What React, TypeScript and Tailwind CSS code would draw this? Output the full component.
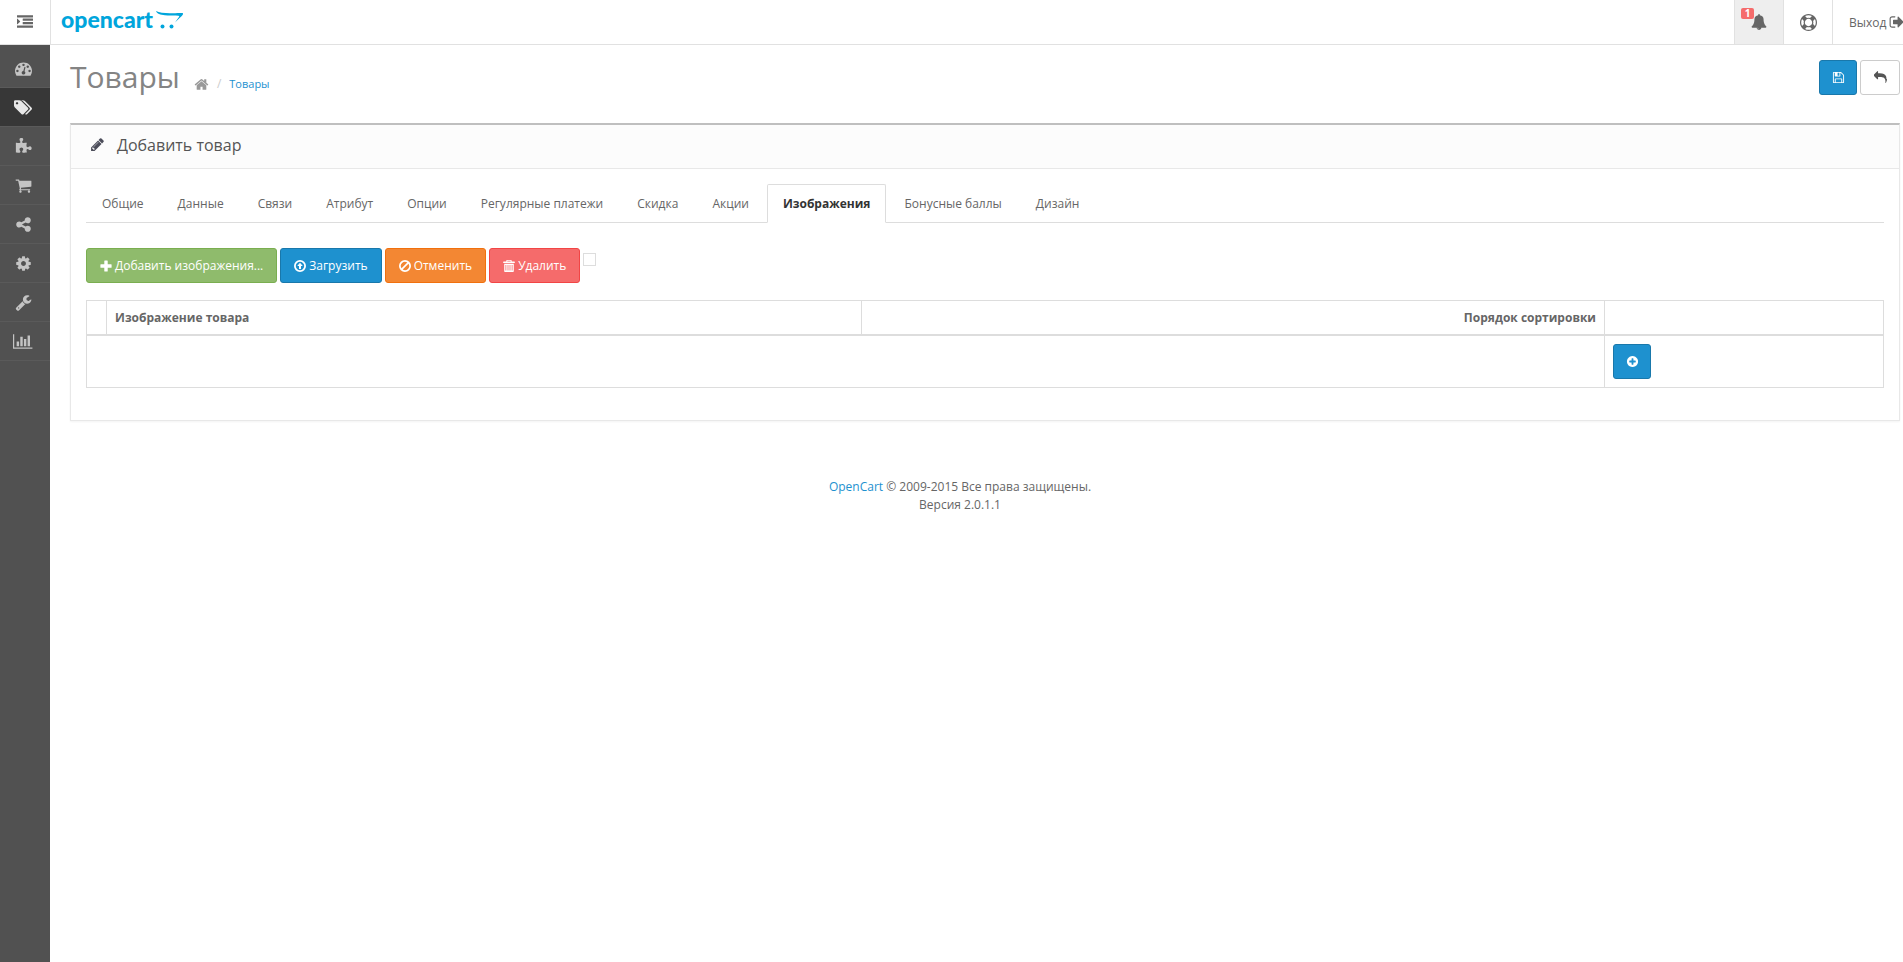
import { useState } from 'react';
import clsx from 'clsx';

type IconProps = { d: string; className?: string; viewBox?: string };

function Icon({ d, className, viewBox = '0 0 1792 1792' }: IconProps) {
  return (
    <svg viewBox={viewBox} className={clsx('inline-block shrink-0 fill-current', className)} aria-hidden="true">
      <path fillRule="evenodd" d={d} />
    </svg>
  );
}

const icons = {
  indent:
    'M352 832q0 14-9 23l-288 288q-9 9-23 9-13 0-22.5-9.5t-9.5-22.5v-576q0-13 9.5-22.5t22.5-9.5q14 0 23 9l288 288q9 9 9 23zM32 1280h1728q13 0 22.5 9.5t9.5 22.5v192q0 13-9.5 22.5t-22.5 9.5h-1728q-13 0-22.5-9.5t-9.5-22.5v-192q0-13 9.5-22.5t22.5-9.5zM672 896h1088q13 0 22.5 9.5t9.5 22.5v192q0 13-9.5 22.5t-22.5 9.5h-1088q-13 0-22.5-9.5t-9.5-22.5v-192q0-13 9.5-22.5t22.5-9.5zM672 512h1088q13 0 22.5 9.5t9.5 22.5v192q0 13-9.5 22.5t-22.5 9.5h-1088q-13 0-22.5-9.5t-9.5-22.5v-192q0-13 9.5-22.5t22.5-9.5zM32 128h1728q13 0 22.5 9.5t9.5 22.5v192q0 13-9.5 22.5t-22.5 9.5h-1728q-13 0-22.5-9.5t-9.5-22.5v-192q0-13 9.5-22.5t22.5-9.5z',
  dashboard:
    'M384 1152q0-53-37.5-90.5t-90.5-37.5-90.5 37.5-37.5 90.5 37.5 90.5 90.5 37.5 90.5-37.5 37.5-90.5zm192-448q0-53-37.5-90.5t-90.5-37.5-90.5 37.5-37.5 90.5 37.5 90.5 90.5 37.5 90.5-37.5 37.5-90.5zm428 481l101-382q6-26-7.5-48.5t-38.5-29.5-48 6.5-30 39.5l-101 382q-60 5-107 43.5t-63 98.5q-20 77 20 146t117 89 146-20 89-117q16-60-6-117t-72-91zm660-33q0-53-37.5-90.5t-90.5-37.5-90.5 37.5-37.5 90.5 37.5 90.5 90.5 37.5 90.5-37.5 37.5-90.5zm-640-640q0-53-37.5-90.5t-90.5-37.5-90.5 37.5-37.5 90.5 37.5 90.5 90.5 37.5 90.5-37.5 37.5-90.5zm448 192q0-53-37.5-90.5t-90.5-37.5-90.5 37.5-37.5 90.5 37.5 90.5 90.5 37.5 90.5-37.5 37.5-90.5zm320 448q0 261-141 483-19 29-54 29h-1402q-35 0-54-29-141-221-141-483 0-182 71-348t191-286 286-191 348-71 348 71 286 191 191 286 71 348z',
  tags: 'M448 448q0-53-37.5-90.5t-90.5-37.5-90.5 37.5-37.5 90.5 37.5 90.5 90.5 37.5 90.5-37.5 37.5-90.5zm1067 576q0 53-37 90l-491 492q-39 37-91 37-53 0-90-37l-715-716q-38-37-64.5-101t-26.5-117v-416q0-52 38-90t90-38h416q53 0 117 26.5t102 64.5l715 714q37 39 37 91zm384 0q0 53-37 90l-491 492q-39 37-91 37-36 0-59-14t-53-45l470-470q37-37 37-90 0-52-37-91l-715-714q-38-38-102-64.5t-117-26.5h224q53 0 117 26.5t102 64.5l715 714q37 39 37 91z',
  puzzle:
    'M1755 1083q0 81-44.5 135t-123.5 54q-41 0-77.5-17.5t-59-38-56.5-38-71-17.5q-110 0-110 124 0 39 16 115t15 115v5q-22 0-33 1-34 3-97.5 11.5t-115.5 13.5-98 5q-61 0-103-26.5t-42-83.5q0-37 17.5-71t38-56.5 38-59 17.5-77.5q0-79-54-123.5t-135-44.5q-84 0-143 45.5t-59 127.5q0 43 15 83t33.5 64.5 33.5 53 15 50.5q0 45-46 89-37 35-117 35-95 0-245-24-9-2-27.5-4t-27.5-4l-13-2q-1 0-3-1-2 0-2-1v-1024q2 1 17.5 3.5t34 5 21.5 3.5q150 24 245 24 80 0 117-35 46-44 46-89 0-22-15-50.5t-33.5-53-33.5-64.5-15-83q0-82 59-127.5t144-45.5q80 0 134 44.5t54 123.5q0 41-17.5 77.5t-38 59-38 56.5-17.5 71q0 57 42 83.5t103 26.5q64 0 180-15t163-17v2q-1 2-3.5 17.5t-5 34-3.5 21.5q-24 150-24 245 0 80 35 117 44 46 89 46 22 0 50.5-15t53-33.5 64.5-33.5 83-15q82 0 127.5 59t45.5 143z',
  cart: 'M704 1536q0 52-38 90t-90 38-90-38-38-90 38-90 90-38 90 38 38 90zm896 0q0 52-38 90t-90 38-90-38-38-90 38-90 90-38 90 38 38 90zm128-1088v512q0 24-16.5 42.5t-40.5 21.5l-1044 122q13 60 13 70 0 16-24 64h920q26 0 45 19t19 45-19 45-45 19h-1024q-26 0-45-19t-19-45q0-11 8-31.5t16-36 21.5-40 15.5-29.5l-177-823h-204q-26 0-45-19t-19-45 19-45 45-19h256q16 0 28.5 6.5t19.5 15.5 13 24.5 8 26 5.5 29.5 4.5 26h1201q26 0 45 19t19 45z',
  share:
    'M1344 1024q133 0 226.5 93.5t93.5 226.5-93.5 226.5-226.5 93.5-226.5-93.5-93.5-226.5q0-12 2-34l-360-180q-92 86-218 86-133 0-226.5-93.5t-93.5-226.5 93.5-226.5 226.5-93.5q126 0 218 86l360-180q-2-22-2-34 0-133 93.5-226.5t226.5-93.5 226.5 93.5 93.5 226.5-93.5 226.5-226.5 93.5q-126 0-218-86l-360 180q2 22 2 34t-2 34l360 180q92-86 218-86z',
  cog: 'M1152 896q0-106-75-181t-181-75-181 75-75 181 75 181 181 75 181-75 75-181zm512-109v222q0 12-8 23t-20 13l-185 28q-19 54-39 91 35 50 107 138 10 12 10 25t-9 23q-27 37-99 108t-94 71q-12 0-26-9l-138-108q-44 23-91 38-16 136-29 186-7 28-36 28h-222q-14 0-24.5-8.5t-11.5-21.5l-28-184q-49-16-90-37l-141 107q-10 9-25 9-14 0-25-11-126-114-165-168-7-10-7-23 0-12 8-23 15-21 51-66.5t54-70.5q-27-50-41-99l-183-27q-13-2-21-12.5t-8-23.5v-222q0-12 8-23t19-13l186-28q14-46 39-92-40-57-107-138-10-12-10-24 0-10 9-23 26-36 98.5-107.5t94.5-71.5q13 0 26 10l138 107q44-23 91-38 16-136 29-186 7-28 36-28h222q14 0 24.5 8.5t11.5 21.5l28 184q49 16 90 37l142-107q9-9 24-9 13 0 25 10 129 119 165 170 7 8 7 22 0 12-8 23-15 21-51 66.5t-54 70.5q26 50 41 98l183 28q13 2 21 12.5t8 23.5z',
  wrench:
    'M448 1472q0-26-19-45t-45-19-45 19-19 45 19 45 45 19 45-19 19-45zm644-420l-682 682q-37 37-90 37-52 0-91-37l-106-108q-38-36-38-90 0-53 38-91l681-681q39 98 114.5 173.5t173.5 114.5zm634-435q0 39-23 106-47 134-164.5 217.5t-258.5 83.5q-185 0-316.5-131.5t-131.5-316.5 131.5-316.5 316.5-131.5q58 0 121.5 16.5t107.5 46.5q16 11 16 28t-16 28l-293 169v224l193 107q5-3 79-48.5t135.5-81 70.5-35.5q15 0 23.5 10t8.5 25z',
  chart:
    'M640 896v512h-256v-512h256zm384-512v1024h-256v-1024h256zm1024 1152v128h-2048v-1536h128v1408h1920zm-640-896v768h-256v-768h256zm384-384v1152h-256v-1152h256z',
  bell: 'M912 1696q0-16-16-16-59 0-101.5-42.5t-42.5-101.5q0-16-16-16t-16 16q0 73 51.5 124.5t124.5 51.5q16 0 16-16zm816-288q0 52-38 90t-90 38h-448q0 106-75 181t-181 75-181-75-75-181h-448q-52 0-90-38t-38-90q50-42 91-88t85-119.5 74.5-158.5 50-206 19.5-260q0-152 117-282.5t307-158.5q-8-19-8-39 0-40 28-68t68-28 68 28 28 68q0 20-8 39 190 28 307 158.5t117 282.5q0 139 19.5 260t50 206 74.5 158.5 85 119.5 91 88z',
  lifeRing:
    'M896 0q182 0 348 71t286 191 191 286 71 348-71 348-191 286-286 191-348 71-348-71-286-191-191-286-71-348 71-348 191-286 286-191 348-71zm0 128q-190 0-361 90l194 194q82-28 167-28t167 28l194-194q-171-90-361-90zm-678 1129l194-194q-28-82-28-167t28-167l-194-194q-90 171-90 361t90 361zm678 407q190 0 361-90l-194-194q-82 28-167 28t-167-28l-194 194q171 90 361 90zm0-384q159 0 271.5-112.5t112.5-271.5-112.5-271.5-271.5-112.5-271.5 112.5-112.5 271.5 112.5 271.5 271.5 112.5zm484-217l194 194q90-171 90-361t-90-361l-194 194q28 82 28 167t-28 167z',
  signOut:
    'M704 1440q0 4 1 20t.5 26.5-3 23.5-10 19.5-20.5 6.5h-320q-119 0-203.5-84.5t-84.5-203.5v-704q0-119 84.5-203.5t203.5-84.5h320q13 0 22.5 9.5t9.5 22.5q0 4 1 20t.5 26.5-3 23.5-10 19.5-20.5 6.5h-320q-66 0-113 47t-47 113v704q0 66 47 113t113 47h312l11.5 1 11.5 3 8 5.5 7 9 2 13.5zm928-544q0 26-19 45l-544 544q-19 19-45 19t-45-19-19-45v-288h-448q-26 0-45-19t-19-45v-384q0-26 19-45t45-19h448v-288q0-26 19-45t45-19 45 19l544 544q19 19 19 45z',
  home: 'M1472 992v480q0 26-19 45t-45 19h-384v-384h-256v384h-384q-26 0-45-19t-19-45v-480q0-1 .5-3t.5-3l575-474 575 474q1 2 1 6zm223-69l-62 74q-8 9-21 11h-3q-13 0-21-7l-692-577-692 577q-12 8-24 7-13-2-21-11l-62-74q-8-10-7-23.5t11-21.5l719-599q32-26 76-26t76 26l244 204v-195q0-14 9-23t23-9h192q14 0 23 9t9 23v408l219 182q10 8 11 21.5t-7 23.5z',
  save: 'M512 1536h768v-384h-768v384zm896 0h128v-896q0-14-10-38.5t-20-34.5l-281-281q-10-10-34-20t-39-10v416q0 40-28 68t-68 28h-576q-40 0-68-28t-28-68v-416h-128v1280h128v-416q0-40 28-68t68-28h832q40 0 68 28t28 68v416zm-384-928v-320q0-13-9.5-22.5t-22.5-9.5h-192q-13 0-22.5 9.5t-9.5 22.5v320q0 13 9.5 22.5t22.5 9.5h192q13 0 22.5-9.5t9.5-22.5zm640 32v928q0 40-28 68t-68 28h-1344q-40 0-68-28t-28-68v-1344q0-40 28-68t68-28h928q40 0 88 20t76 48l280 280q28 28 48 76t20 88z',
  reply:
    'M1792 1120q0 166-127 451-3 7-10.5 24t-13.5 30-13 22q-12 17-28 17-15 0-23.5-10t-8.5-25q0-9 2.5-26.5t2.5-23.5q5-68 5-123 0-112-19.5-200.5t-54-153.5-89.5-112-117.5-79-147.5-46-170.5-24-194.5-7h-224v256q0 26-19 45t-45 19-45-19l-512-512q-19-19-19-45t19-45l512-512q19-19 45-19t45 19 19 45v256h224q713 0 875 403 53 134 53 333z',
  pencil:
    'M491 1536l91-91-235-235-91 91v107h128v128h107zm523-928q0-22-22-22-10 0-17 7l-542 542q-7 7-7 17 0 22 22 22 10 0 17-7l542-542q7-7 7-17zm-54-192l416 416-832 832h-416v-416zm683 96q0 53-37 90l-166 166-416-416 166-165q36-38 90-38 53 0 91 38l235 234q37 39 37 91z',
  plusCircle:
    'M1344 960v-128q0-26-19-45t-45-19h-256v-256q0-26-19-45t-45-19h-128q-26 0-45 19t-19 45v256h-256q-26 0-45 19t-19 45v128q0 26 19 45t45 19h256v256q0 26 19 45t45 19h128q26 0 45-19t19-45v-256h256q26 0 45-19t19-45zm320-64q0 209-103 385.5t-279.5 279.5-385.5 103-385.5-103-279.5-279.5-103-385.5 103-385.5 279.5-279.5 385.5-103 385.5 103 279.5 279.5 103 385.5z',
  // the uploader toolbar icons sit on a 12 unit grid
  plus: 'M4.300.9q0-.5.5-.5h2.400q.5 0 .5.5v3.400h3.400q.5 0 .5.5v2.400q0 .5-.5.5h-3.400v3.400q0 .5-.5.5h-2.400q-.5 0-.5-.5v-3.400h-3.400q-.5 0-.5-.5v-2.400q0-.5.5-.5h3.400z',
  upload:
    'M6 0a6 6 0 1 1 0 12a6 6 0 1 1 0-12zM6 1.800a4.200 4.200 0 1 0 0 8.400a4.200 4.200 0 1 0 0-8.400zM6 2.700l2.800 3.200h-1.800v3h-2v-3h-1.800z',
  ban: 'M6 0a6 6 0 1 1 0 12a6 6 0 1 1 0-12zM8.300 2.500a4.200 4.200 0 0 0-5.800 5.800zM9.500 3.700l-5.800 5.800a4.200 4.200 0 0 0 5.800-5.800z',
  trash:
    'M4 0h4q.7 0 .7.7v.8h2.600q.5 0 .5.5v1h-11.600v-1q0-.5.5-.5h2.600v-.8q0-.7.7-.7zM4.300.8v.7h3.400v-.7zM1.200 3.800h9.600v7.400q0 .8-.8.8h-8q-.8 0-.8-.8zM2.500 5v5.500h.8v-5.500zM4.600 5v5.500h.8v-5.500zM6.600 5v5.500h.8v-5.500zM8.700 5v5.500h.8v-5.500z',
};

const menu = [
  { label: 'Панель состояния', d: icons.dashboard, viewBox: '0 0 1792 1792' },
  { label: 'Каталог', d: icons.tags, viewBox: '0 0 1899 1792', active: true },
  { label: 'Дополнения', d: icons.puzzle, viewBox: '0 0 1792 1792' },
  { label: 'Продажи', d: icons.cart, viewBox: '0 0 1792 1792' },
  { label: 'Маркетинг', d: icons.share, viewBox: '0 0 1792 1792' },
  { label: 'Система', d: icons.cog, viewBox: '0 0 1792 1792' },
  { label: 'Инструменты', d: icons.wrench, viewBox: '0 0 1792 1792' },
  { label: 'Отчеты', d: icons.chart, viewBox: '0 0 2048 1792' },
];

const tabs = [
  'Общие',
  'Данные',
  'Связи',
  'Атрибут',
  'Опции',
  'Регулярные платежи',
  'Скидка',
  'Акции',
  'Изображения',
  'Бонусные баллы',
  'Дизайн',
];

const actions = [
  { label: 'Добавить изображения...', d: icons.plus, color: 'border-[#7aae50] bg-[#8fbb6c]' },
  { label: 'Загрузить', d: icons.upload, color: 'border-[#1978ab] bg-[#1e91cf]' },
  { label: 'Отменить', d: icons.ban, color: 'border-[#f1700d] bg-[#f38733]' },
  { label: 'Удалить', d: icons.trash, color: 'border-[#f24545] bg-[#f56b6b]' },
];

function Header() {
  return (
    <header className="flex h-[45px] overflow-hidden border-b border-[#e1e1e1] bg-white">
      <button aria-label="Меню" className="flex w-[51px] shrink-0 items-center justify-center border-r border-[#e1e1e1] text-[#666]">
        <Icon d={icons.indent} className="size-4" />
      </button>
      <a href="#" className="flex items-start gap-[3px] pt-[5px] pl-2.5 text-[#00a5dc]">
        <span className="font-[Lato,sans-serif] text-[23px] leading-7 font-black">opencart</span>
        <svg viewBox="0 0 27 18" className="mt-1.5 h-[18px] w-[27px] fill-current" aria-hidden="true">
          <path d="M0 0c3 1.800 8 2.200 14 2.200c5 0 10-.6 12.600-.1c1.400.9-.8 2.900-3 5l-4.600 4.300l3.200-4.500c1.200-1.500 1.600-2 .2-2.200c-5-.4-9 .1-13.500-.4c-4.500-.5-8-1.500-8.900-4.300z" />
          <circle cx="6.500" cy="15.500" r="2" />
          <circle cx="15.500" cy="15.500" r="2" />
        </svg>
      </a>
      <nav className="ml-auto flex text-[#666]">
        <button aria-label="Уведомления" className="relative flex w-[49px] items-center justify-center border-l border-[#e1e1e1] bg-[#eee]">
          <Icon d={icons.bell} className="size-4" />
          <span className="absolute top-2 left-1.5 flex h-[11px] w-[13px] items-center justify-center rounded-xs bg-[#f56b6b] text-[10px] font-bold text-white">
            1
          </span>
        </button>
        <button aria-label="Помощь" className="flex w-[49px] items-center justify-center border-l border-[#e1e1e1]">
          <Icon d={icons.lifeRing} className="size-[17px]" />
        </button>
        <a href="#" className="flex w-[71px] items-center gap-[3px] border-l border-[#e1e1e1] pl-4 whitespace-nowrap">
          Выход
          <Icon d={icons.signOut} className="size-4" />
        </a>
      </nav>
    </header>
  );
}

function Sidebar() {
  return (
    <nav className="w-[50px] shrink-0 bg-[#515151] pt-1">
      <ul>
        {menu.map(item => (
          <li key={item.label}>
            <a
              href="#"
              aria-label={item.label}
              className={clsx(
                'flex h-[39px] items-center justify-center border-b border-[#5a5a5a] pr-1',
                item.active ? 'bg-[#373737] text-[#e8e8e8]' : 'text-[#c4c4c4]'
              )}
            >
              <Icon d={item.d} viewBox={item.viewBox} className="h-[17px] w-auto" />
            </a>
          </li>
        ))}
      </ul>
    </nav>
  );
}

function PageHeader() {
  return (
    <div className="flex items-start justify-between pt-[15px]">
      <div className="flex items-baseline">
        <h1 className="text-[30px] leading-[34px] font-normal text-[#848484]">Товары</h1>
        <ol className="flex items-center pl-3.5 leading-4">
          <li className="text-[#999]">
            <a href="#" aria-label="Главная">
              <Icon d={icons.home} className="size-[15px]" />
            </a>
          </li>
          <li className="flex">
            <span className="px-2 text-[#ccc]">/</span>
            <a href="#" className="text-[11px] text-[#1e91cf]">
              Товары
            </a>
          </li>
        </ol>
      </div>
      <div className="flex gap-[3px]">
        <button aria-label="Сохранить" className="flex h-[35px] w-[38px] items-center justify-center rounded-[3px] border border-[#1978ab] bg-[#1e91cf] text-white">
          <Icon d={icons.save} className="size-[13px]" />
        </button>
        <button aria-label="Отмена" className="flex h-[35px] w-10 items-center justify-center rounded-[3px] border border-[#ccc] bg-white text-[#555]">
          <Icon d={icons.reply} className="size-[13px]" />
        </button>
      </div>
    </div>
  );
}

function ImagesTable() {
  return (
    <table className="mt-[17px] mb-[17px] w-full table-fixed border-collapse border border-[#ddd]">
      <colgroup>
        <col className="w-5" />
        <col className="w-[42%]" />
        <col />
        <col className="w-[279px]" />
      </colgroup>
      <thead>
        <tr className="h-[34px] border-b-2 border-[#ddd]">
          <td className="border-r border-[#ddd]" />
          <th className="border-r border-[#ddd] px-2 text-left font-bold">Изображение товара</th>
          <th className="border-r border-[#ddd] px-2 text-right font-bold">Порядок сортировки</th>
          <td />
        </tr>
      </thead>
      <tbody>
        <tr>
          <td colSpan={3} className="border-r border-[#ddd]" />
          <td className="p-2">
            <button aria-label="Добавить" className="flex h-[35px] w-[38px] items-center justify-center rounded-[3px] border border-[#1978ab] bg-[#1e91cf] text-white">
              <Icon d={icons.plusCircle} className="size-[13px]" />
            </button>
          </td>
        </tr>
      </tbody>
    </table>
  );
}

export default function App() {
  const [tab, setTab] = useState('Изображения');
  const [checked, setChecked] = useState(false);

  return (
    <div className="flex min-h-screen flex-col bg-white font-['Open_Sans',sans-serif] text-xs leading-[17px] text-[#666]">
      <Header />
      <div className="flex flex-1">
        <Sidebar />

        <main className="min-w-0 flex-1">
          <div className="pr-[3px] pl-5">
            <PageHeader />

            <section className="mt-7 border border-t-2 border-[#e8e8e8] border-t-[#bfbfbf] shadow-xs">
              <div className="flex h-11 items-center gap-3 border-b border-[#e8e8e8] bg-[#fcfcfc] pb-1 pl-[19px] text-[#4c4d5a]">
                <Icon d={icons.pencil} className="size-[15px]" />
                <h3 className="text-base text-[#555]">Добавить товар</h3>
              </div>

              <div className="p-[15px]">
                {/* Tabs */}
                <div role="tablist" className="flex border-b border-[#ddd]">
                  {tabs.map(name => (
                    <button
                      key={name}
                      role="tab"
                      aria-selected={tab === name}
                      onClick={() => setTab(name)}
                      className={clsx(
                        '-mb-px mr-0.5 border px-[15px] py-2.5',
                        tab === name
                          ? 'rounded-t-xs border-[#ddd] border-b-white bg-white font-bold text-[#333]'
                          : 'border-transparent'
                      )}
                    >
                      {name}
                    </button>
                  ))}
                </div>

                {/* Uploader toolbar */}
                <div className="mt-[25px] flex items-start gap-[3px]">
                  {actions.map(action => (
                    <button
                      key={action.label}
                      className={clsx('flex h-[35px] items-center gap-[3px] rounded-[3px] border px-[13px] font-medium text-white', action.color)}
                    >
                      <Icon d={action.d} viewBox="0 0 12 12" className="size-3" />
                      {action.label}
                    </button>
                  ))}
                  <input
                    type="checkbox"
                    aria-label="Выбрать все"
                    checked={checked}
                    onChange={e => setChecked(e.target.checked)}
                    className="mt-[5px] size-[13px] appearance-none border border-[#ddd] bg-white checked:bg-[#1e91cf]"
                  />
                </div>

                <ImagesTable />
              </div>
            </section>
          </div>

          <footer className="pt-[57px] pr-[33px] text-center leading-[18px]">
            <a href="#" className="text-[#1e91cf]">
              OpenCart
            </a>{' '}
            © 2009-2015 Все права защищены.
            <br />
            Версия 2.0.1.1
          </footer>
        </main>
      </div>
    </div>
  );
}
